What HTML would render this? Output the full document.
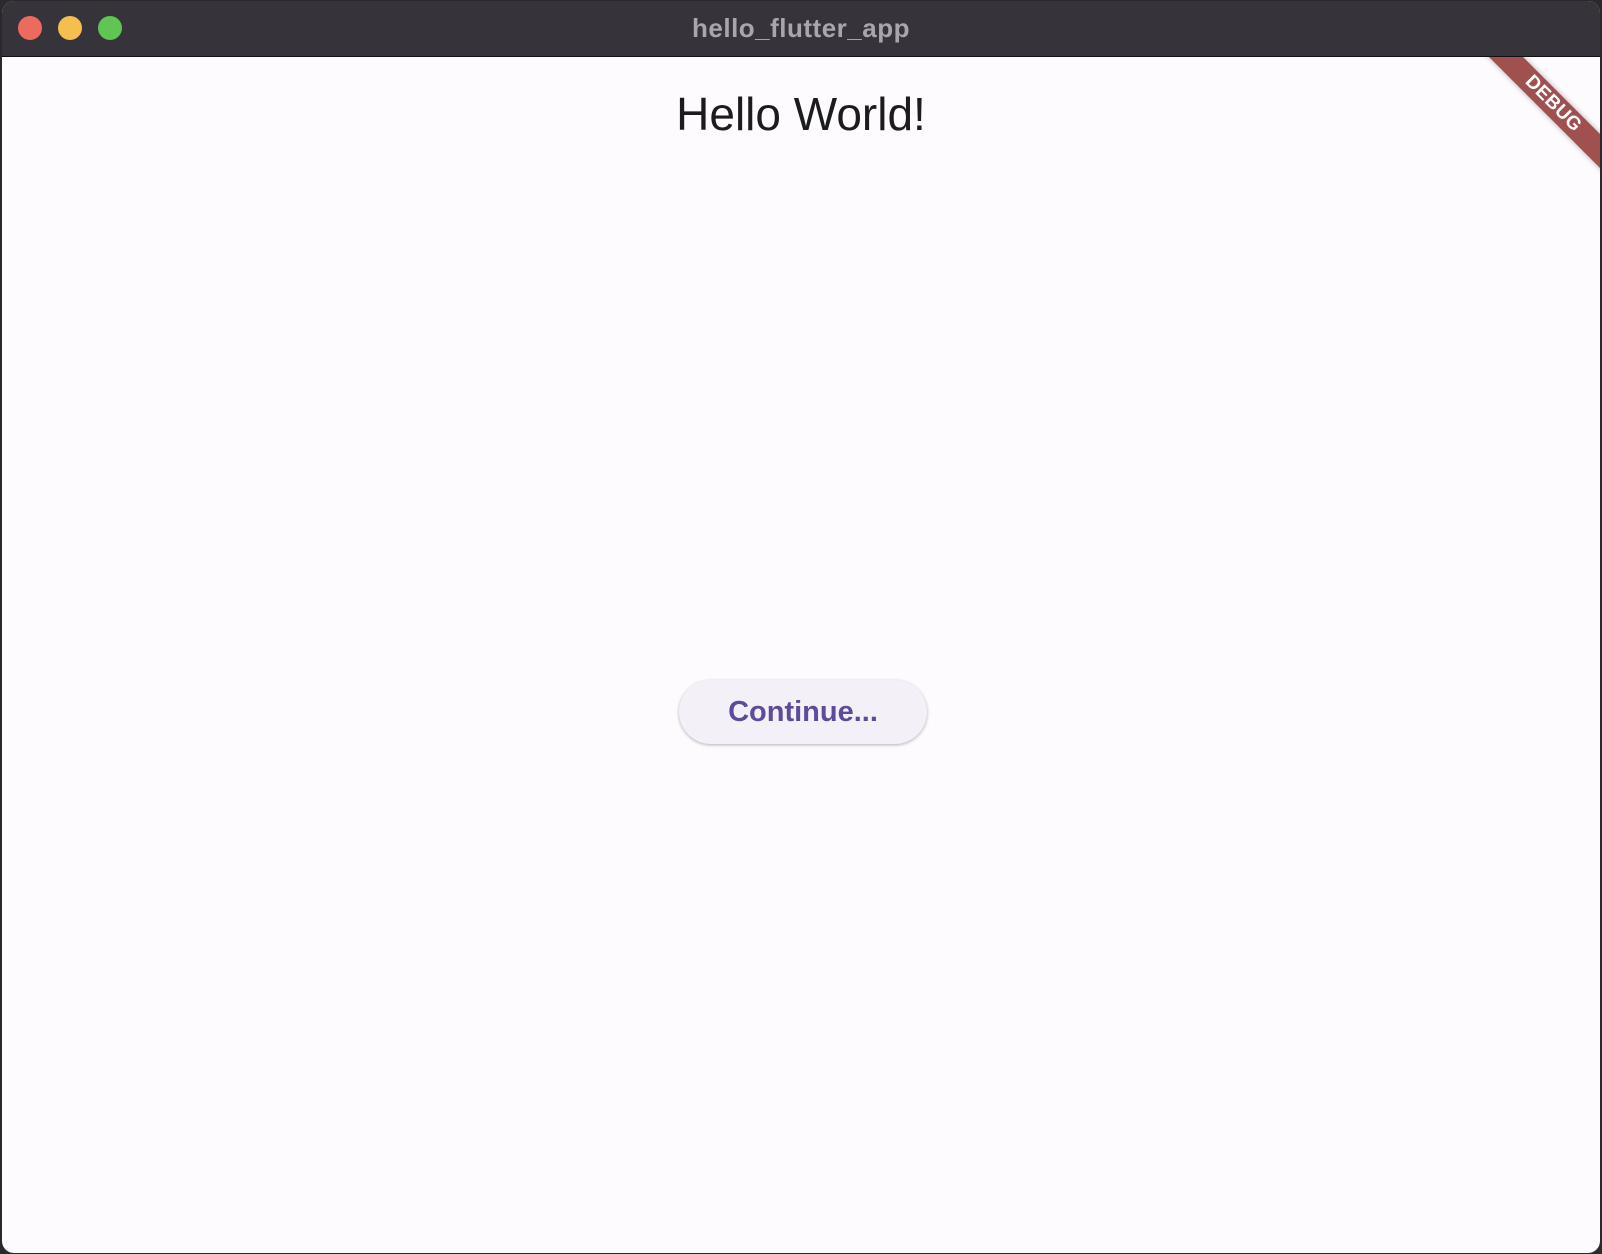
<!DOCTYPE html>
<html><head><meta charset="utf-8"><style>
html,body{margin:0;padding:0;width:1602px;height:1254px;overflow:hidden;background:#2a2a2e;font-family:"Liberation Sans",sans-serif;}
.win{position:absolute;left:2px;top:1px;width:1598px;height:1252px;border-radius:12px;overflow:hidden;background:#fdfbfe;}
.bar{position:absolute;left:0;top:0;width:100%;height:55px;background:#36333b;border-bottom:1px solid #111;}
.dot{position:absolute;top:15px;width:24px;height:24px;border-radius:50%;}
.title{position:absolute;left:0;right:0;top:12px;text-align:center;color:#a8a5ad;font-weight:bold;font-size:26px;letter-spacing:.5px;}
.hello{position:absolute;left:0;right:0;top:86px;text-align:center;color:#1c1b1f;font-size:46px;}
.btn{position:absolute;left:677px;top:679px;width:248px;height:64px;border-radius:32px;background:#f4f0f8;box-shadow:0 1px 3px rgba(0,0,0,.3);text-align:center;line-height:64px;color:#5f4b9c;font-weight:bold;font-size:29px;}
.banner{position:absolute;left:1451px;top:91px;width:200px;height:24px;background:#a0504f;transform:rotate(45deg);color:#fff;font-weight:bold;font-size:19px;text-align:center;line-height:24px;box-shadow:0 0 6px rgba(0,0,0,.3);letter-spacing:.5px;}
</style></head><body>
<div class="win">
<div class="hello">Hello World!</div>
<div class="btn">Continue...</div>
<div class="banner">DEBUG</div>
<div class="bar">
<div class="dot" style="left:16px;background:#ed6a5e"></div>
<div class="dot" style="left:56px;background:#f5bf4f"></div>
<div class="dot" style="left:96px;background:#61c554"></div>
<div class="title">hello_flutter_app</div>
</div>
</div>
</body></html>
